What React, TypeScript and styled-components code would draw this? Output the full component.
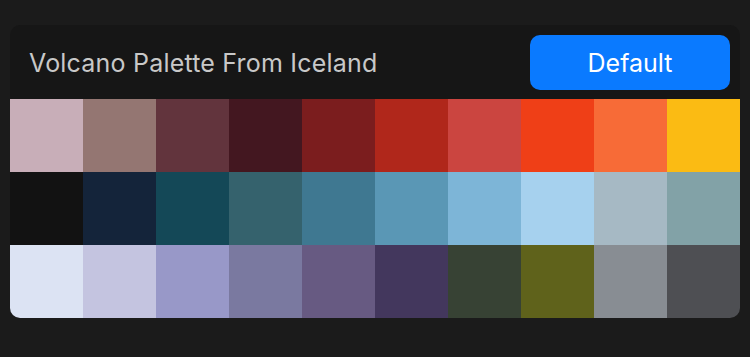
import React from "react";
import styled, { createGlobalStyle } from "styled-components";

const GlobalStyle = createGlobalStyle`
  html, body {
    margin: 0;
    padding: 0;
    background: #1b1b1b;
    font-family: Inter, "Noto Sans", sans-serif;
  }
`;

const Page = styled.div`
  width: 750px;
  height: 357px;
  padding: 25px 10px 0 10px;
  box-sizing: border-box;
`;

const Card = styled.section`
  background: #161616;
  border-radius: 10px;
  overflow: hidden;
  display: flex;
  flex-direction: column;
`;

const Header = styled.header`
  display: flex;
  align-items: center;
  justify-content: space-between;
  padding: 10px 10px 9px 19px;
`;

const Title = styled.h1`
  margin: 0;
  font-size: 25px;
  font-weight: 400;
  color: #c8c8c8;
  letter-spacing: 0.2px;
`;

const DefaultButton = styled.button`
  width: 200px;
  height: 55px;
  border: none;
  border-radius: 10px;
  background: #0a7aff;
  color: #ffffff;
  font-family: Inter, "Noto Sans", sans-serif;
  font-size: 25px;
  font-weight: 400;
  cursor: pointer;
`;

const Grid = styled.div`
  display: grid;
  grid-template-columns: repeat(10, 73px);
  grid-auto-rows: 73px;
`;

const Swatch = styled.div<{ $color: string }>`
  background: ${(p) => p.$color};
`;

const colors = [
  "#c8aeb8", "#947672", "#62343d", "#431720", "#7b1d1e", "#b0271b", "#cb4540", "#ef3f17", "#f76b37", "#fbbb13",
  "#121212", "#14243a", "#144857", "#35626d", "#3f7891", "#5a97b5", "#7db5d7", "#a6d1ee", "#a6b9c4", "#82a2a7",
  "#dce3f3", "#c4c4e0", "#9898c8", "#7a79a0", "#675a82", "#43375d", "#374234", "#5f621b", "#888d93", "#4e4f53",
];

export default function App() {
  return (
    <>
      <GlobalStyle />
      <Page>
        <Card>
          <Header>
            <Title>Volcano Palette From Iceland</Title>
            <DefaultButton>Default</DefaultButton>
          </Header>
          <Grid>
            {colors.map((c, i) => (
              <Swatch key={i} $color={c} />
            ))}
          </Grid>
        </Card>
      </Page>
    </>
  );
}
